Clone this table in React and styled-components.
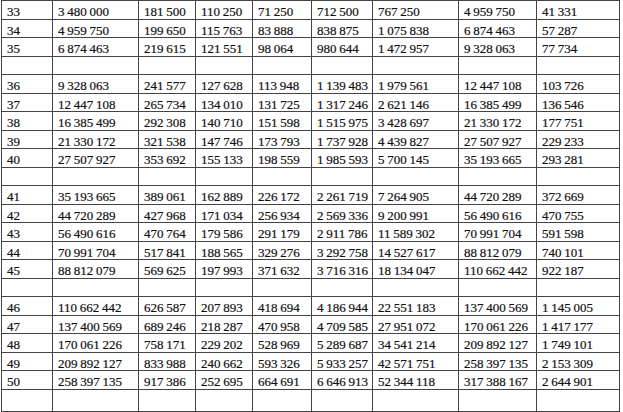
import React from "react";
import styled, { createGlobalStyle } from "styled-components";

const Global = createGlobalStyle`
  html, body { margin: 0; padding: 0; background: #ffffff; }
  body { font-family: "Liberation Serif", "Times New Roman", serif; }
`;

const Grid = styled.div`
  display: grid;
  grid-template-columns: 50px 85px 56px 56px 58px 60px 85px 77px 82px;
  grid-template-rows: repeat(21, 17.5px) 21px;
  gap: 1px;
  padding: 1px;
  margin-left: 1px;
  width: max-content;
  background: #444444;
`;

const Cell = styled.div`
  background: #ffffff;
  color: #111111;
  font-family: "Liberation Serif", "Times New Roman", serif;
  font-size: 13px;
  line-height: 17.5px;
  padding: 2px 0 0 5px;
  white-space: nowrap;
  overflow: hidden;
  word-spacing: -0.5px;
  -webkit-text-stroke: 0.2px #111111;
`;

const rows = [
  ["33", "3 480 000", "181 500", "110 250", "71 250", "712 500", "767 250", "4 959 750", "41 331"],
  ["34", "4 959 750", "199 650", "115 763", "83 888", "838 875", "1 075 838", "6 874 463", "57 287"],
  ["35", "6 874 463", "219 615", "121 551", "98 064", "980 644", "1 472 957", "9 328 063", "77 734"],
  null,
  ["36", "9 328 063", "241 577", "127 628", "113 948", "1 139 483", "1 979 561", "12 447 108", "103 726"],
  ["37", "12 447 108", "265 734", "134 010", "131 725", "1 317 246", "2 621 146", "16 385 499", "136 546"],
  ["38", "16 385 499", "292 308", "140 710", "151 598", "1 515 975", "3 428 697", "21 330 172", "177 751"],
  ["39", "21 330 172", "321 538", "147 746", "173 793", "1 737 928", "4 439 827", "27 507 927", "229 233"],
  ["40", "27 507 927", "353 692", "155 133", "198 559", "1 985 593", "5 700 145", "35 193 665", "293 281"],
  null,
  ["41", "35 193 665", "389 061", "162 889", "226 172", "2 261 719", "7 264 905", "44 720 289", "372 669"],
  ["42", "44 720 289", "427 968", "171 034", "256 934", "2 569 336", "9 200 991", "56 490 616", "470 755"],
  ["43", "56 490 616", "470 764", "179 586", "291 179", "2 911 786", "11 589 302", "70 991 704", "591 598"],
  ["44", "70 991 704", "517 841", "188 565", "329 276", "3 292 758", "14 527 617", "88 812 079", "740 101"],
  ["45", "88 812 079", "569 625", "197 993", "371 632", "3 716 316", "18 134 047", "110 662 442", "922 187"],
  null,
  ["46", "110 662 442", "626 587", "207 893", "418 694", "4 186 944", "22 551 183", "137 400 569", "1 145 005"],
  ["47", "137 400 569", "689 246", "218 287", "470 958", "4 709 585", "27 951 072", "170 061 226", "1 417 177"],
  ["48", "170 061 226", "758 171", "229 202", "528 969", "5 289 687", "34 541 214", "209 892 127", "1 749 101"],
  ["49", "209 892 127", "833 988", "240 662", "593 326", "5 933 257", "42 571 751", "258 397 135", "2 153 309"],
  ["50", "258 397 135", "917 386", "252 695", "664 691", "6 646 913", "52 344 118", "317 388 167", "2 644 901"],
  null,
];

const EMPTY = Array(9).fill("");

export default function App() {
  return (
    <>
      <Global />
      <Grid>
        {rows.map((r, i) =>
          (r || EMPTY).map((v, j) => <Cell key={`${i}-${j}`}>{v}</Cell>)
        )}
      </Grid>
    </>
  );
}
